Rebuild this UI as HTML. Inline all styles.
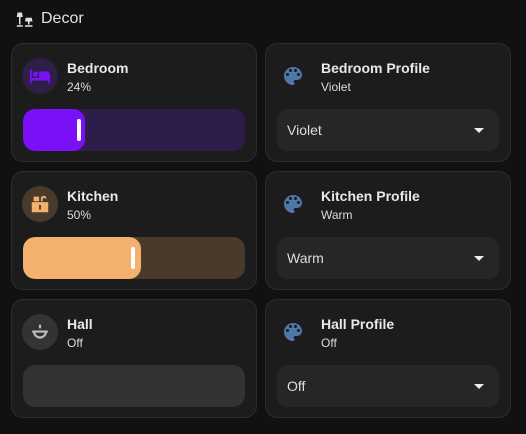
<!DOCTYPE html><html><head><style>
body{margin:0;background:#111111;width:526px;height:434px;font-family:"Liberation Sans",sans-serif;color:#e1e1e1;position:relative;overflow:hidden}
.h{position:absolute;left:41px;top:10px;font-size:16px;color:#e1e1e1}
.card{position:absolute;width:246px;height:119px;background:#1c1c1c;border:1px solid #2c2c2c;border-radius:12px;box-sizing:border-box}
.ic{position:absolute;left:10px;top:14px;width:36px;height:36px;border-radius:50%;display:flex;align-items:center;justify-content:center}
.n{position:absolute;left:55px;top:16px;font-size:14px;font-weight:bold;color:#e8e8e8}
.s{position:absolute;left:55px;top:36px;font-size:12px;color:#dcdcdc}
.sl{position:absolute;left:11px;top:65px;width:222px;height:42px;border-radius:12px;overflow:hidden}
.f{position:absolute;left:0;top:0;height:42px;border-radius:12px}
.hd{position:absolute;top:10px;width:4px;height:22px;background:#fff;border-radius:2px}
.sel{position:absolute;left:11px;top:65px;width:222px;height:42px;border-radius:10px;background:#262626;font-size:14px;color:#ddd;line-height:42px;text-indent:10px}
.ar{position:absolute;right:15px;top:19px;width:0;height:0;border-left:5px solid transparent;border-right:5px solid transparent;border-top:5px solid #eee}
.pal{position:absolute;left:15px;top:20px}
</style></head><body>
<svg style="position:absolute;left:16px;top:11px" width="18" height="18" viewBox="0 0 24 24" fill="#e1e1e1"><path d="M2 2h6l1 6H1z M4 8h2v10H4z M1 19h8v2H1z M13 9h8l1 5H12z M16 14h2v4h-2z M12 19h10v2H12z"/></svg>
<div class="h">Decor</div>

<div class="card" style="left:11px;top:43px">
<div class="ic" style="background:#2d1f47"><svg width="22" height="22" viewBox="0 0 24 24" fill="#7a10f5"><path d="M19,7H11V14H3V5H1V20H3V17H21V20H23V11A4,4 0 0,0 19,7M7,13A3,3 0 0,0 10,10A3,3 0 0,0 7,7A3,3 0 0,0 4,10A3,3 0 0,0 7,13Z"/></svg></div>
<div class="n">Bedroom</div><div class="s">24%</div>
<div class="sl" style="background:#2e1d4a"><div class="f" style="width:62px;background:#7a10f5"></div><div class="hd" style="left:54px"></div></div></div>

<div class="card" style="left:265px;top:43px">
<svg class="pal" width="24" height="24" viewBox="0 0 24 24" fill="#4f77a8"><path d="M17.5,12A1.5,1.5 0 0,1 16,10.5A1.5,1.5 0 0,1 17.5,9A1.5,1.5 0 0,1 19,10.5A1.5,1.5 0 0,1 17.5,12M14.5,8A1.5,1.5 0 0,1 13,6.5A1.5,1.5 0 0,1 14.5,5A1.5,1.5 0 0,1 16,6.5A1.5,1.5 0 0,1 14.5,8M9.5,8A1.5,1.5 0 0,1 8,6.5A1.5,1.5 0 0,1 9.5,5A1.5,1.5 0 0,1 11,6.5A1.5,1.5 0 0,1 9.5,8M6.5,12A1.5,1.5 0 0,1 5,10.5A1.5,1.5 0 0,1 6.5,9A1.5,1.5 0 0,1 8,10.5A1.5,1.5 0 0,1 6.5,12M12,3A9,9 0 0,0 3,12A9,9 0 0,0 12,21A1.5,1.5 0 0,0 13.5,19.5C13.5,19.11 13.35,18.760 13.11,18.5C12.88,18.23 12.73,17.88 12.73,17.5A1.5,1.5 0 0,1 14.23,16H16A5,5 0 0,0 21,11C21,6.58 16.97,3 12,3Z"/></svg>
<div class="n">Bedroom Profile</div><div class="s">Violet</div>
<div class="sel">Violet<div class="ar"></div></div></div>

<div class="card" style="left:11px;top:171px">
<div class="ic" style="background:#4a3a2c"><svg width="22" height="22" viewBox="0 0 24 24" fill="#f4b06e"><path d="M3 10h18v11H3z M5 9V4h6v5z M13 9V6a3 3 0 0 1 6 0h-2a1 1 0 0 0-2 0v3z"/><rect x="11" y="13" width="2" height="5" fill="#4a3a2c"/></svg></div>
<div class="n">Kitchen</div><div class="s">50%</div>
<div class="sl" style="background:#4a3a2c"><div class="f" style="width:118px;background:#f4b06e"></div><div class="hd" style="left:108px"></div></div></div>

<div class="card" style="left:265px;top:171px">
<svg class="pal" width="24" height="24" viewBox="0 0 24 24" fill="#4f77a8"><path d="M17.5,12A1.5,1.5 0 0,1 16,10.5A1.5,1.5 0 0,1 17.5,9A1.5,1.5 0 0,1 19,10.5A1.5,1.5 0 0,1 17.5,12M14.5,8A1.5,1.5 0 0,1 13,6.5A1.5,1.5 0 0,1 14.5,5A1.5,1.5 0 0,1 16,6.5A1.5,1.5 0 0,1 14.5,8M9.5,8A1.5,1.5 0 0,1 8,6.5A1.5,1.5 0 0,1 9.5,5A1.5,1.5 0 0,1 11,6.5A1.5,1.5 0 0,1 9.5,8M6.5,12A1.5,1.5 0 0,1 5,10.5A1.5,1.5 0 0,1 6.5,9A1.5,1.5 0 0,1 8,10.5A1.5,1.5 0 0,1 6.5,12M12,3A9,9 0 0,0 3,12A9,9 0 0,0 12,21A1.5,1.5 0 0,0 13.5,19.5C13.5,19.11 13.35,18.760 13.11,18.5C12.88,18.23 12.73,17.88 12.73,17.5A1.5,1.5 0 0,1 14.23,16H16A5,5 0 0,0 21,11C21,6.58 16.97,3 12,3Z"/></svg>
<div class="n">Kitchen Profile</div><div class="s">Warm</div>
<div class="sel">Warm<div class="ar"></div></div></div>

<div class="card" style="left:11px;top:299px">
<div class="ic" style="background:#333"><svg width="22" height="22" viewBox="0 0 24 24" fill="none" stroke="#bdbdbd" stroke-width="2.4"><path d="M12 4v4 M3.5 11.5h17 M5.5 11.5a6.5 6.5 0 0 0 13 0"/></svg></div>
<div class="n">Hall</div><div class="s">Off</div>
<div class="sl" style="background:#333"></div></div>

<div class="card" style="left:265px;top:299px">
<svg class="pal" width="24" height="24" viewBox="0 0 24 24" fill="#4f77a8"><path d="M17.5,12A1.5,1.5 0 0,1 16,10.5A1.5,1.5 0 0,1 17.5,9A1.5,1.5 0 0,1 19,10.5A1.5,1.5 0 0,1 17.5,12M14.5,8A1.5,1.5 0 0,1 13,6.5A1.5,1.5 0 0,1 14.5,5A1.5,1.5 0 0,1 16,6.5A1.5,1.5 0 0,1 14.5,8M9.5,8A1.5,1.5 0 0,1 8,6.5A1.5,1.5 0 0,1 9.5,5A1.5,1.5 0 0,1 11,6.5A1.5,1.5 0 0,1 9.5,8M6.5,12A1.5,1.5 0 0,1 5,10.5A1.5,1.5 0 0,1 6.5,9A1.5,1.5 0 0,1 8,10.5A1.5,1.5 0 0,1 6.5,12M12,3A9,9 0 0,0 3,12A9,9 0 0,0 12,21A1.5,1.5 0 0,0 13.5,19.5C13.5,19.11 13.35,18.760 13.11,18.5C12.88,18.23 12.73,17.88 12.73,17.5A1.5,1.5 0 0,1 14.23,16H16A5,5 0 0,0 21,11C21,6.58 16.97,3 12,3Z"/></svg>
<div class="n">Hall Profile</div><div class="s">Off</div>
<div class="sel">Off<div class="ar"></div></div></div>
</body></html>
